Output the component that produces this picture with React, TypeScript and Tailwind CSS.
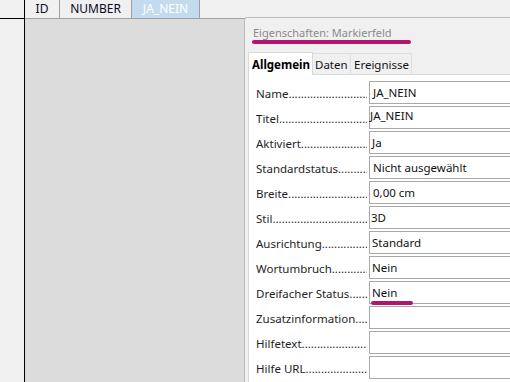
import React from "react";

type Row = { label: string; value: string; pad: string; shift?: string; mark?: boolean };

const rows: Row[] = [
  { label: "Name", value: "JA_NEIN", pad: "pl-[3px]" },
  { label: "Titel", value: "JA_NEIN", pad: "pl-0", shift: "-translate-y-[2px]" },
  { label: "Aktiviert", value: "Ja", pad: "pl-[2px]" },
  { label: "Standardstatus", value: "Nicht ausgewählt", pad: "pl-[3px]" },
  { label: "Breite", value: "0,00 cm", pad: "pl-[3px]" },
  { label: "Stil", value: "3D", pad: "pl-[1px]" },
  { label: "Ausrichtung", value: "Standard", pad: "pl-[2px]" },
  { label: "Wortumbruch", value: "Nein", pad: "pl-[2px]" },
  { label: "Dreifacher Status", value: "Nein", pad: "pl-[2px]", mark: true },
  { label: "Zusatzinformation", value: "", pad: "pl-[2px]" },
  { label: "Hilfetext", value: "", pad: "pl-[2px]" },
  { label: "Hilfe URL", value: "", pad: "pl-[2px]" },
];

const dots = ".".repeat(80);

function PropRow({ row }: { row: Row }) {
  return (
    <div className="flex h-[23px] mb-[2px]">
      <div className="w-[120px] pl-[7px] flex items-center pt-[2px]">
        <span className="block w-[111px] overflow-hidden whitespace-nowrap text-[#1e1e1e]">
          {row.label}
          {dots}
        </span>
      </div>
      <div className={`relative flex-1 h-[23px] border border-[#a8a8a8] bg-white flex items-center ${row.pad}`}>
        <span className={`whitespace-nowrap text-[#111] ${row.shift ?? ""}`}>{row.value}</span>
        {row.mark && (
          <div className="absolute left-[1px] top-[19px] w-[42px] h-[4px] rounded-full bg-[#b0166b]" />
        )}
      </div>
    </div>
  );
}

export default function App() {
  return (
    <div className="relative w-[510px] h-[382px] overflow-hidden bg-[#f0f0f0] font-['Noto_Sans',sans-serif] text-[11.5px]">
      {/* Datasheet */}
      <div className="flex h-full">
        <div className="w-[25px] border-r border-black flex flex-col">
          <div className="h-[19px] border-b border-black" />
          <div className="flex-1 bg-[#f0f0f0]" />
        </div>
        <div className="flex-1 flex flex-col">
          <div className="h-[19px] flex border-b border-[#a0a0a0] text-[12px] leading-[18px]">
            <div className="w-[35px] border-r border-[#a0a0a0] text-center text-[#0a0a1e]">ID</div>
            <div className="w-[72px] border-r border-[#a0a0a0] text-center text-[#0a0a1e]">NUMBER</div>
            <div className="w-[68px] border-r border-[#a0a0a0] bg-[#c4dbef] text-center text-white">JA_NEIN</div>
          </div>
          <div className="flex-1 bg-[#dcdcdc]" />
        </div>
      </div>

      {/* Property sheet pane, docked over the grid and running past the window edge */}
      <div className="absolute left-[244px] top-[17px] right-[-40px] bottom-0 bg-[#f0f0f0] border-l border-t border-[#bcbcbc] rounded-tl-[3px] pl-[3px]">
        <div className="relative h-[34px] pl-[5px] pt-[7px] leading-[16px] text-[11px] text-[#8a8a8a]">
          Eigenschaften: Markierfeld
          <div className="absolute left-[4px] top-[22px] w-[159px] h-[4px] rounded-full bg-[#b0166b]" />
        </div>

        <div className="relative z-10 flex items-end h-[22px]">
          <div className="w-[65px] h-[23px] -mb-px bg-white border-l border-t border-r border-[#d9d9d9] pl-[3px] pt-[3px] font-bold text-black">
            Allgemein
          </div>
          <div className="w-[38px] h-[21px] bg-[#f0f0f0] border-t border-r border-[#dedede] pl-[2px] pt-[2px] text-[#111]">
            Daten
          </div>
          <div className="w-[61px] h-[21px] bg-[#f0f0f0] border-t border-r border-[#dedede] pl-[3px] pt-[2px] text-[#111]">
            Ereignisse
          </div>
        </div>

        <div className="h-full bg-white border-t border-l border-[#d9d9d9] pt-[6px]">
          {rows.map((r) => (
            <PropRow key={r.label} row={r} />
          ))}
        </div>
      </div>
    </div>
  );
}
